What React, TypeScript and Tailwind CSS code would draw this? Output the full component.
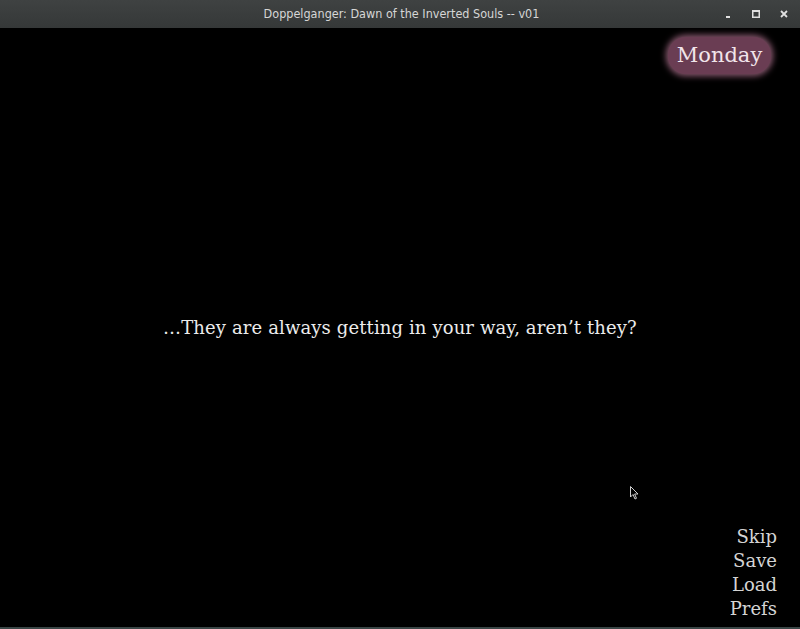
import React from "react"

const serif = { fontFamily: '"DejaVu Serif", "Liberation Serif", serif' }

export default function App() {
  return (
    <div className="flex h-[629px] w-[800px] flex-col overflow-hidden bg-black">
      {/* window title bar */}
      <div className="relative flex h-[28px] shrink-0 items-center justify-center bg-gradient-to-b from-[#3f4242] to-[#353838]">
        <span
          className="pl-[3px] text-[12.5px] text-[#d6d6d6]"
          style={{ fontFamily: '"DejaVu Sans Condensed", "DejaVu Sans", sans-serif' }}
        >
          Doppelganger: Dawn of the Inverted Souls -- v01
        </span>
        <div className="absolute right-[12px] top-0 flex h-full items-center gap-[20px] text-[#e0e0e0]">
          <svg width="8" height="8" viewBox="0 0 8 8">
            <rect x="2" y="6" width="4" height="2" fill="currentColor" />
          </svg>
          <svg width="8" height="8" viewBox="0 0 8 8">
            <rect x="0.75" y="0.75" width="6.5" height="6.5" fill="none" stroke="currentColor" strokeWidth="1.5" />
            <rect x="0" y="0" width="8" height="2" fill="currentColor" />
          </svg>
          <svg width="8" height="8" viewBox="0 0 8 8">
            <path d="M1 1 L7 7 M7 1 L1 7" stroke="currentColor" strokeWidth="1.8" />
          </svg>
        </div>
      </div>

      {/* game screen */}
      <div className="relative flex flex-1 flex-col">
        <div className="flex justify-end pr-[29px] pt-[9px]">
          <div
            className="flex h-[37px] w-[103px] items-center justify-center rounded-[18px] bg-[#6a3d53] text-[21px] text-[#f1e4ea] shadow-[0_0_6px_2px_#8a5a70]"
            style={serif}
          >
            Monday
          </div>
        </div>

        <div className="flex flex-1 items-center justify-center pt-[56px]">
          <p className="text-[18px] tracking-[0.12px] text-[#ececec]" style={serif}>
            …They are always getting in your way, aren’t they?
          </p>
        </div>

        <div className="flex flex-col items-end pb-[6px] pr-[23px] text-[18px] leading-[24px] text-[#d4d4d4]" style={serif}>
          <span>Skip</span>
          <span>Save</span>
          <span>Load</span>
          <span>Prefs</span>
        </div>

        {/* mouse pointer */}
        <svg className="absolute left-[630px] top-[458px]" width="10" height="14" viewBox="0 0 10 14">
          <path d="M0.5 0.5 L0.5 11 L3 8.5 L5 13 L6.5 12.3 L4.6 8 L8 8 Z" fill="#000" stroke="#cfcfcf" strokeWidth="1" />
        </svg>
      </div>

      <div className="h-[2px] shrink-0 bg-[#3a4646]" />
    </div>
  )
}
